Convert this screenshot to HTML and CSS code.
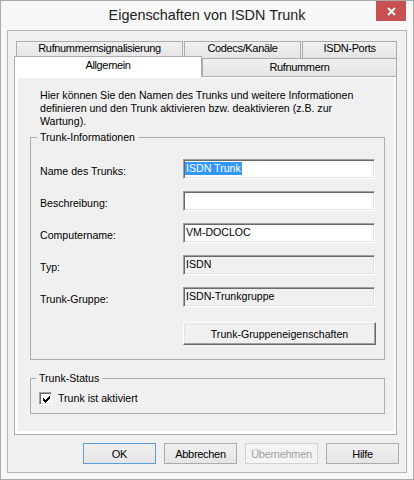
FILE: index.html
```html
<!DOCTYPE html>
<html lang="de">
<head>
    <meta charset="UTF-8">
    <meta name="viewport" content="width=device-width, initial-scale=1.0">
    <title>Eigenschaften von ISDN Trunk</title>
    <link rel="stylesheet" href="styles.css">
</head>
<body>
    <div class="window">
        <div class="titlebar">
            <span class="title">Eigenschaften von ISDN Trunk</span>
            <button class="close" title="Schließen">
                <svg width="9" height="9" viewBox="0 0 9 9">
                    <path d="M1 1 L8 8 M8 1 L1 8" stroke="#fff" stroke-width="1.9" fill="none"/>
                </svg>
            </button>
        </div>

        <div class="client">
            <div class="tab-row back">
                <div class="tab tab-signal">Rufnummernsignalisierung</div>
                <div class="tab tab-codecs">Codecs/Kanäle</div>
                <div class="tab tab-ports">ISDN-Ports</div>
            </div>
            <div class="tab-row front">
                <div class="tab tab-general selected">Allgemein</div>
                <div class="tab tab-numbers">Rufnummern</div>
            </div>

            <div class="page">
                <div class="page-body">
                    <p class="intro">
                        Hier können Sie den Namen des Trunks und weitere Informationen<br>
                        definieren und den Trunk aktivieren bzw. deaktivieren (z.B. zur<br>
                        Wartung).
                    </p>

                    <fieldset class="group group-info">
                        <legend>Trunk-Informationen</legend>
                        <div class="form">
                            <label>Name des Trunks:</label>
                            <div class="edit"><span class="sel">ISDN Trunk</span></div>

                            <label>Beschreibung:</label>
                            <div class="edit"></div>

                            <label>Computername:</label>
                            <div class="edit">VM-DOCLOC</div>

                            <label>Typ:</label>
                            <div class="edit readonly">ISDN</div>

                            <label>Trunk-Gruppe:</label>
                            <div class="edit readonly">ISDN-Trunkgruppe</div>

                            <button class="btn-classic">Trunk-Gruppeneigenschaften</button>
                        </div>
                    </fieldset>

                    <fieldset class="group group-status">
                        <legend>Trunk-Status</legend>
                        <label class="check">
                            <span class="box">
                                <svg width="7" height="7" viewBox="0 0 7 7" shape-rendering="crispEdges">
                                    <path d="M6 0 H7 V3 H6 V4 H5 V5 H4 V6 H3 V7 H2 V6 H1 V5 H0 V2 H1 V3 H2 V4 H3 V3 H4 V2 H5 V1 H6 Z" fill="#000"/>
                                </svg>
                            </span>
                            Trunk ist aktiviert
                        </label>
                    </fieldset>
                </div>
            </div>

            <div class="buttons">
                <button class="btn default">OK</button>
                <button class="btn">Abbrechen</button>
                <button class="btn" disabled>Übernehmen</button>
                <button class="btn">Hilfe</button>
            </div>
        </div>
    </div>
</body>
</html>
```

FILE: styles.css
```css
* {
    margin: 0;
    padding: 0;
    box-sizing: border-box;
}

body {
    font-family: "Liberation Sans", Arial, sans-serif;
    font-size: 10.6px;
    color: #000;
    background: #f0f0f0;
}

/* Fensterrahmen */
.window {
    position: relative;
    display: flex;
    flex-direction: column;
    width: 414px;
    height: 480px;
    border: 1px solid #ababab;
    padding: 0 6px 6px;
    background: #f8f8f8;
}

.titlebar {
    height: 29px;
    display: flex;
    justify-content: center;
}

.title {
    font-size: 14.4px;
    line-height: 29px;
    color: #222;
}

.close {
    position: absolute;
    top: 0;
    right: 7px;
    width: 30px;
    height: 20px;
    border: none;
    background: #c75050;
    display: flex;
    align-items: center;
    justify-content: center;
}

.client {
    flex: 1;
    display: flex;
    flex-direction: column;
    border: 1px solid #b5b5b5;
    background: #f0f0f0;
    padding: 10px 9px 8px 6px;
}

/* Registerkarten */
.tab-row {
    display: flex;
}

.tab {
    font-size: 11px;
    letter-spacing: -0.35px;
    line-height: 13px;
    text-align: center;
    white-space: nowrap;
    border: 1px solid #acacac;
    border-bottom: none;
    background: linear-gradient(#f0f0f0, #e5e5e5);
}

.tab-row.back {
    height: 17px;
    padding-left: 2px;
}

.tab-row.back .tab {
    height: 17px;
    margin-right: 1px;
}

.tab-row.back .tab:last-child {
    margin-right: 0;
}

.tab-signal { width: 167px; }
.tab-codecs { width: 117px; }
.tab-ports  { width: 95px; }

.tab-row.front {
    height: 18px;
    align-items: flex-end;
}

.tab-row.front .tab {
    height: 18px;
    padding-top: 2px;
}

.tab-general { width: 188px; }
.tab-numbers { width: 195px; }

.tab-row.front .tab.selected {
    position: relative;
    z-index: 1;
    height: 21px;
    margin-bottom: -1px;
    background: #fff;
}

.page {
    height: 359px;
    border: 1px solid #acacac;
    background: #fff;
    padding: 1px 2px 3px 3px;
}

.page-body {
    height: 100%;
    background: #f0f0f0;
    padding: 11px 0 0 22px;
}

.intro {
    line-height: 13px;
}

/* Gruppenfelder */
.group {
    min-width: 0;
    border: 1px solid #adadad;
    margin: 3px 9px 0 -10px;
}

.group legend {
    line-height: 13px;
    padding: 0 3px;
    margin-left: -3px;
}

.group-info {
    padding: 15px 0 20px 9px;
}

.group-status {
    margin-top: 12px;
    padding: 7px 0 8px 8px;
}

.form {
    display: grid;
    grid-template-columns: 143px 192px;
    grid-auto-rows: 20px;
    row-gap: 12px;
}

.form label {
    align-self: end;
    line-height: 13px;
    padding-bottom: 1px;
}

/* eingelassene Eingabefelder */
.edit {
    height: 20px;
    line-height: 13px;
    padding: 2px 2px 0;
    white-space: nowrap;
    background: #fff;
    border: 1px solid;
    border-color: #a0a0a0 #fff #fff #a0a0a0;
    box-shadow: inset 1px 1px 0 #696969, inset -1px -1px 0 #e3e3e3;
}

.edit.readonly {
    background: #f0f0f0;
}

.sel {
    display: inline-block;
    margin-left: -1px;
    padding: 0 1px;
    background: #3399ff;
    color: #fff;
}

.btn-classic {
    grid-column: 2;
    width: 193px;
    height: 23px;
    margin-top: 3px;
    font-family: inherit;
    font-size: 10.6px;
    color: #000;
    background: #f0f0f0;
    border: 1px solid;
    border-color: #fff #696969 #696969 #fff;
    box-shadow: inset -1px -1px 0 #a0a0a0, inset 1px 1px 0 #e3e3e3;
}

.check {
    display: flex;
    align-items: center;
    gap: 6px;
    line-height: 13px;
}

.box {
    width: 13px;
    height: 13px;
    display: flex;
    align-items: center;
    justify-content: center;
    background: #fff;
    border: 1px solid;
    border-color: #a0a0a0 #fff #fff #a0a0a0;
    box-shadow: inset 1px 1px 0 #696969, inset -1px -1px 0 #e3e3e3;
}

.box svg {
    margin: 1px 0 0 1px;
}

/* Dialogschaltflächen */
.buttons {
    display: flex;
    justify-content: flex-end;
    gap: 8px;
    margin: 8px -2px 0 0;
}

.btn {
    width: 73px;
    height: 21px;
    font-family: inherit;
    font-size: 11px;
    letter-spacing: -0.3px;
    color: #000;
    border: 1px solid #acacac;
    background: linear-gradient(#f0f0f0, #e5e5e5);
}

.btn.default {
    border-color: #5a9fe2;
}

.btn:disabled {
    color: #a0a0a0;
    border-color: #d2d2d2;
    background: #f4f4f4;
}
```
